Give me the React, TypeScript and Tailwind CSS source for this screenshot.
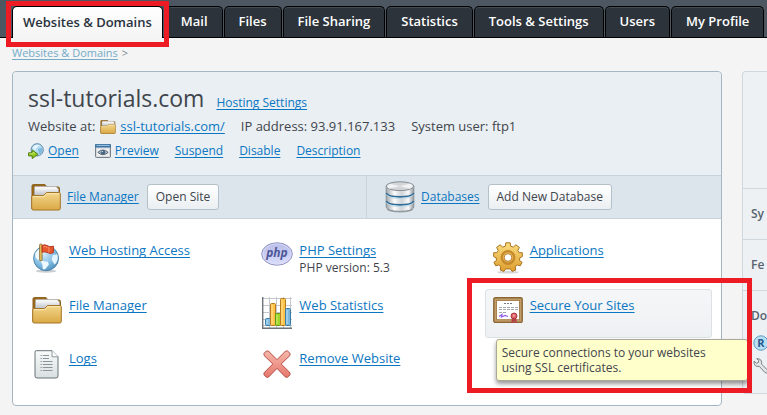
import type { ReactNode } from "react";

type IconProps = { className?: string };

const tabs = ["Mail", "Files", "File Sharing", "Statistics", "Tools & Settings", "Users", "My Profile"];

const linkClass = "text-[#0b77c2] underline underline-offset-2 [text-decoration-skip-ink:none]";

function FolderIcon({ className }: IconProps) {
  return (
    <svg viewBox="0 0 30 27" className={className} fill="none">
      <defs>
        <linearGradient id="folderFront" x1="0" y1="8" x2="0" y2="26" gradientUnits="userSpaceOnUse">
          <stop stopColor="#f3d78d" />
          <stop offset="1" stopColor="#dba945" />
        </linearGradient>
        <linearGradient id="folderPaper" x1="0" y1="3" x2="0" y2="12" gradientUnits="userSpaceOnUse">
          <stop stopColor="#ffffff" />
          <stop offset="1" stopColor="#b9bdc4" />
        </linearGradient>
      </defs>
      <path d="M1 25V2Q1 .6 2.4 .6H14L16 3H27Q28.5 3 28.5 4.5V24Q28.5 25.5 27 25.5H2Z" fill="#9a6a1d" stroke="#8b5d17" />
      <path d="M3.5 12V3.5Q3.5 2.6 4.5 2.6H25L27.5 5V12Z" fill="url(#folderPaper)" stroke="#a6a9ad" strokeWidth=".7" />
      <path d="M.7 24V12.8Q.7 11.5 2 11.5H12.5L15.5 8.5H28Q29.3 8.5 29.3 9.8V24.4Q29.3 26 27.8 26H2.2Q.7 26 .7 24Z" fill="url(#folderFront)" stroke="#a47427" />
      <path d="M1.8 12.7H13L16 9.7H28.2" stroke="#fbeab5" />
    </svg>
  );
}

function OpenIcon({ className }: IconProps) {
  return (
    <svg viewBox="0 0 16 16" className={className} fill="none">
      <circle cx="9.2" cy="6.8" r="6.1" fill="#b5dcf2" stroke="#5c86a6" />
      <path d="M5 4Q8 1 12 2.2Q8 4 7.5 7Q5.5 7 5 4Z" fill="#e9f7ff" />
      <path d="M10 6L14.5 4.5Q15 10 11 11.5Z" fill="#80bade" />
      <path d="M.6 9.8H4.2V7L10 11.3L4.2 15.6V12.9H.6Z" fill="#93c822" stroke="#4f7c10" strokeLinejoin="round" />
      <path d="M1.5 10.7H5V9.2L7 10.6" stroke="#d3f07d" strokeWidth=".8" />
    </svg>
  );
}

function PreviewIcon({ className }: IconProps) {
  return (
    <svg viewBox="0 0 16 14" className={className} fill="none">
      <rect x=".5" y=".5" width="15" height="13" rx="1" fill="#d4d9de" stroke="#77818b" />
      <rect x="0" y="0" width="16" height="3.6" rx="1" fill="#3d75a3" />
      <path d="M1.5 1.4H14.5" stroke="#9dc4e2" />
      <rect x="2" y="4.6" width="12" height="7.6" fill="#eef0f2" />
      <path d="M2.8 8.4Q8 3.6 13.2 8.4Q8 13 2.8 8.4Z" fill="#a9bccb" stroke="#5d6872" />
      <circle cx="8" cy="8.3" r="2.2" fill="#45647f" />
      <circle cx="7.3" cy="7.6" r=".7" fill="#fff" />
    </svg>
  );
}

function DatabaseIcon({ className }: IconProps) {
  return (
    <svg viewBox="0 0 30 32" className={className} fill="none">
      <defs>
        <linearGradient id="dbBody" x1="1" y1="0" x2="29" y2="0" gradientUnits="userSpaceOnUse">
          <stop stopColor="#9fa5a9" />
          <stop offset=".3" stopColor="#fbfcfc" />
          <stop offset=".55" stopColor="#d1d5d8" />
          <stop offset=".8" stopColor="#f7f8f9" />
          <stop offset="1" stopColor="#8d9499" />
        </linearGradient>
      </defs>
      <ellipse cx="15" cy="28" rx="13" ry="3.6" fill="#9ca5ac" />
      <path d="M1.2 5V26Q2 30.2 15 30.4Q28 30.2 28.8 26V5Z" fill="url(#dbBody)" stroke="#899197" />
      <path d="M1.2 12Q3 15.7 15 15.8Q27 15.7 28.8 12M1.2 20Q3 23.7 15 23.8Q27 23.7 28.8 20" stroke="#2e6b97" strokeWidth="1.7" />
      <path d="M1.5 13.8Q4 17.3 15 17.4Q26 17.3 28.5 13.8M1.5 21.8Q4 25.3 15 25.4Q26 25.3 28.5 21.8" stroke="#b3d4e8" strokeWidth=".8" />
      <ellipse cx="15" cy="5.2" rx="13.8" ry="4.4" fill="#d3d6d8" stroke="#858d92" />
      <path d="M15 5.2L4 7.7Q0 5 5 2.8ZM15 5.2L25 2.6Q30 5 25 7.8Z" fill="#f1f2f3" />
    </svg>
  );
}

function GlobeFlagIcon({ className }: IconProps) {
  return (
    <svg viewBox="0 0 32 32" className={className} fill="none">
      <defs>
        <radialGradient id="globeSea" cx=".38" cy=".3" r=".75">
          <stop stopColor="#d8effc" />
          <stop offset=".6" stopColor="#84bee3" />
          <stop offset="1" stopColor="#4c90bd" />
        </radialGradient>
      </defs>
      <ellipse cx="15" cy="30" rx="11" ry="1.6" fill="#c9cfd3" />
      <circle cx="15" cy="16.3" r="13.3" fill="url(#globeSea)" stroke="#5080a2" />
      <path d="M3.5 11Q8 4 15 5L13 10L9 14L11 17L7 18Q3 17 3.5 11Z" fill="#f1faff" />
      <path d="M9 19L17 20L18 23L14 28L11.5 28L11 23Z" fill="#eef9ff" />
      <path d="M22 13L27 12Q29 19 24 23L21 18Z" fill="#e5f5fd" />
      <rect x="8.2" y="1.2" width="2.5" height="17.6" rx=".8" fill="#f4cf67" stroke="#80591c" strokeWidth=".9" />
      <path d="M10.8 2.5Q14 1 17.3 3.4Q20 4.8 22.8 3.3V10.2Q20 12 17 10.4Q14 8.8 10.8 9.8Z" fill="#e8562c" stroke="#b52e16" />
      <path d="M12 4Q14 3 16.5 4.8M18 3.8V10.2" stroke="#f89a72" />
    </svg>
  );
}

function PhpIcon({ className }: IconProps) {
  return (
    <svg viewBox="0 0 32 24" className={className}>
      <defs>
        <linearGradient id="phpOval" x1="0" y1="0" x2="0" y2="1">
          <stop stopColor="#b8bce8" />
          <stop offset="1" stopColor="#dcdefc" />
        </linearGradient>
      </defs>
      <ellipse cx="16" cy="12" rx="15.3" ry="11.2" fill="url(#phpOval)" stroke="#8d91bd" />
      <ellipse cx="16" cy="12" rx="14.2" ry="10.1" fill="none" stroke="#dedffb" strokeWidth=".8" />
      <text x="16" y="14.5" textAnchor="middle" fill="#4d5797" className="font-['Open_Sans',sans-serif] text-[12px] font-bold italic">php</text>
    </svg>
  );
}

function GearIcon({ className }: IconProps) {
  return (
    <svg viewBox="0 0 30 32" className={className} fill="none">
      <defs>
        <linearGradient id="gearGold" x1="0" y1="0" x2="0" y2="30" gradientUnits="userSpaceOnUse">
          <stop stopColor="#fbdf83" />
          <stop offset="1" stopColor="#dd9c2c" />
        </linearGradient>
      </defs>
      <ellipse cx="15" cy="30.2" rx="11" ry="1.4" fill="#d6d6d6" />
      <path
        d="M12.8 .8H17.2L17.7 4.2L20.3 5.1L22.9 2.8L26.4 5.4L24.8 8.4L26.3 10.7L29.3 10.7V14.6L26.8 15.8L26.5 18.4L29.1 20.3L27.3 23.8L24.2 23L22.2 24.8L22.8 28L19.2 29.4L17.3 26.9H12.7L10.8 29.4L7.2 28L7.8 24.8L5.8 23L2.7 23.8L.9 20.3L3.5 18.4L3.2 15.8L.7 14.6V10.7H3.7L5.2 8.4L3.6 5.4L7.1 2.8L9.7 5.1L12.3 4.2Z"
        fill="url(#gearGold)"
        stroke="#a8731f"
        strokeLinejoin="round"
      />
      <circle cx="15" cy="15.5" r="6.2" stroke="#c68a2b" strokeWidth="2.4" />
      <circle cx="15" cy="15.5" r="3.8" fill="#fff" stroke="#b78032" />
    </svg>
  );
}

function ChartIcon({ className }: IconProps) {
  return (
    <svg viewBox="0 0 30 32" className={className} fill="none">
      <path d="M1 1.5H30M1 8.5H30M1 15.5H30M1 22.5H30M1 28.5H30M7.5 0V31M14.5 0V31M21.5 0V31M28.5 0V31" stroke="#c4c7cb" />
      <path d="M.7 0V31.3H30" stroke="#6e747a" strokeWidth="1.4" />
      <rect x="3.5" y="21.5" width="5" height="7" rx="1" fill="#83bde0" stroke="#387da9" />
      <rect x="8.5" y="6.5" width="5" height="22" rx="1" fill="#ffc34a" stroke="#b97a1d" />
      <rect x="13.5" y="16.5" width="5" height="12" rx="1" fill="#9ed52c" stroke="#5f941a" />
      <rect x="18.5" y="1.5" width="5" height="27" rx="1" fill="#ffc34a" stroke="#b97a1d" />
      <rect x="23.5" y="11.5" width="5" height="17" rx="1" fill="#7db8dc" stroke="#387da9" />
      <path d="M10 8V27M20 3V27" stroke="#ffe397" />
      <path d="M15 18V27" stroke="#d0f274" />
      <path d="M25 13V27M5 23V27" stroke="#bce2f6" />
    </svg>
  );
}

function CertificateIcon({ className }: IconProps) {
  return (
    <svg viewBox="0 0 30 27" className={className} fill="none">
      <rect x=".8" y=".8" width="28.4" height="24.6" rx="1.5" fill="#c29d67" stroke="#8a6535" strokeWidth="1.4" />
      <rect x="3.5" y="3.5" width="23" height="19.2" fill="#fff" stroke="#a78250" />
      <path d="M11 6.5H20" stroke="#747b85" strokeDasharray="2 1" />
      <path d="M6 10.5H25M6 12.5H25M6 15.5H14" stroke="#a3a7ae" strokeDasharray="3 1" />
      <path d="M6 19.5L9 17.5L8.5 20L12 18.5L15 19.5" stroke="#8a5de8" strokeWidth="1.2" />
      <path d="M19 20.5L18.3 26H20L21 23.8L22.2 26H24L22.8 20.5Z" fill="#b64047" />
      <circle cx="21" cy="19" r="3" fill="#dc6268" stroke="#a83640" />
      <circle cx="20.8" cy="18.7" r="1.1" fill="#f1a1a1" />
    </svg>
  );
}

function LogsIcon({ className }: IconProps) {
  return (
    <svg viewBox="0 0 30 29" className={className} fill="none">
      <defs>
        <linearGradient id="logPage" x1="0" y1="0" x2="0" y2="28" gradientUnits="userSpaceOnUse">
          <stop stopColor="#f9fbfb" />
          <stop offset="1" stopColor="#d9dfe0" />
        </linearGradient>
      </defs>
      <path d="M4.2 .7H20L26 6.7V26Q26 28 24 28H5Q3 28 3 26V2.2Q3 .7 4.2 .7Z" fill="url(#logPage)" stroke="#697377" />
      <path d="M20 .8V6.8H26" fill="#fff" stroke="#8e979b" />
      <path d="M8.5 5.5H17M8.5 8.5H17M8.5 11.5H20.5M8.5 14.5H20.5M8.5 17.5H20.5M8.5 20.5H20.5" stroke="#8b9597" strokeDasharray="1.3 1 12" />
    </svg>
  );
}

function RemoveIcon({ className }: IconProps) {
  return (
    <svg viewBox="0 0 30 29" className={className} fill="none">
      <defs>
        <linearGradient id="removeRed" x1="0" y1="0" x2="0" y2="28" gradientUnits="userSpaceOnUse">
          <stop stopColor="#f7b9ad" />
          <stop offset="1" stopColor="#e6766b" />
        </linearGradient>
      </defs>
      <path
        d="M5 1H6.4L15 9.7L23.6 1H25.6L28 3.4V5.4L19.2 14L28 22.8V24.8L25.6 27.2H23.6L15 18.4L6.4 27.2H4.4L2 24.8V22.8L10.8 14L2 5.4V3.4L4.4 1Z"
        fill="url(#removeRed)"
        stroke="#b44f46"
        strokeLinejoin="round"
      />
    </svg>
  );
}

function RegisteredIcon({ className }: IconProps) {
  return (
    <svg viewBox="0 0 16 16" className={className}>
      <circle cx="8" cy="8" r="7.2" fill="#b9dff4" stroke="#5c9bc3" />
      <text x="8" y="12" textAnchor="middle" fill="#255a91" className="font-['Open_Sans',sans-serif] text-[11px] font-bold">R</text>
    </svg>
  );
}

function WrenchIcon({ className }: IconProps) {
  return (
    <svg viewBox="0 0 16 16" className={className}>
      <path
        d="M1 3.2L3.6 5.2L5.4 4.5L5.8 2.5L3.7 .7Q7.3 .2 8.4 3Q8.9 4.6 8.4 6L14.6 12.1Q15.5 13.3 14.5 14.5Q13.2 15.5 12 14.5L6.2 8.3Q4 9 2.3 7.6Q.7 6 1 3.2Z"
        fill="#e3e6e8"
        stroke="#767d83"
        strokeLinejoin="round"
      />
    </svg>
  );
}

function ToolItem({ icon, label, note }: { icon: ReactNode; label: string; note?: string }) {
  return (
    <div className="flex items-start gap-[7px] px-2 py-2">
      <div className="flex w-[30px] shrink-0 justify-center">{icon}</div>
      <div className="leading-4">
        <a href="#" className={linkClass}>{label}</a>
        {note && <p className="mt-[2px] text-[12px]">{note}</p>}
      </div>
    </div>
  );
}

function PanelButton({ children }: { children: ReactNode }) {
  return (
    <button
      type="button"
      className="h-[26px] rounded-[3px] border border-[#b3c1cb] bg-gradient-to-b from-white to-[#ebeff2] px-2 text-[12px] whitespace-nowrap"
    >
      {children}
    </button>
  );
}

export default function App() {
  return (
    <div className="min-h-screen overflow-hidden bg-[#f4f4f4] font-['Open_Sans',sans-serif] text-[13px] text-[#3f454c]">
      <nav className="flex h-[38px] items-end gap-px border-b border-black bg-[#4c5761] pl-3 text-[13px] font-semibold whitespace-nowrap text-white">
        <a href="#" className="relative mr-[2px] -mb-px flex h-8 items-center rounded-t-[5px] border border-b-0 border-black bg-gradient-to-b from-white to-[#f4f4f4] px-[10px] text-[#29333d]">
          Websites &amp; Domains
          <span className="pointer-events-none absolute -inset-x-[7px] -top-[6px] -bottom-[9px] border-[5px] border-[#ed1c24]" />
        </a>
        {tabs.map((tab) => (
          <a key={tab} href="#" className="flex h-[31px] items-center rounded-t-[5px] border border-b-0 border-black bg-[#2c333a] px-[14px] shadow-[inset_0_1px_0_#434c54]">
            {tab}
          </a>
        ))}
      </nav>

      <div className="flex h-[33px] items-start gap-1 pt-[7px] pl-3 text-[11px] leading-4 text-[#7f8a92]">
        <a href="#" className="text-[#73abc9] underline underline-offset-2 [text-decoration-skip-ink:none]">Websites &amp; Domains</a>
        <span>&gt;</span>
      </div>

      <div className="flex items-start gap-5 pl-3">
        <main className="min-w-0 flex-1 rounded-[4px] border border-[#a4b6c3] bg-white">
          <header className="rounded-t-[4px] bg-[#eaeff3] px-[15px] pt-[10px] pb-[14px]">
            <div className="flex items-baseline gap-3">
              <h1 className="text-[23px] leading-8">ssl-tutorials.com</h1>
              <a href="#" className={`${linkClass} text-[12px]`}>Hosting Settings</a>
            </div>
            <div className="mt-[3px] flex h-5 items-center text-[13px]">
              <span>Website at:</span>
              <FolderIcon className="mr-1 ml-[5px] h-[14px] w-4" />
              <a href="#" className={linkClass}>ssl-tutorials.com/</a>
              <span className="ml-4">IP address: 93.91.167.133</span>
              <span className="ml-4">System user: ftp1</span>
            </div>
            <div className="mt-1 flex h-5 items-center gap-4 text-[12px]">
              <a href="#" className={`${linkClass} flex items-center gap-1`}><OpenIcon className="h-4 w-4" />Open</a>
              <a href="#" className={`${linkClass} flex items-center gap-1`}><PreviewIcon className="h-[14px] w-4" />Preview</a>
              <a href="#" className={linkClass}>Suspend</a>
              <a href="#" className={linkClass}>Disable</a>
              <a href="#" className={linkClass}>Description</a>
            </div>
          </header>

          <div className="grid h-11 grid-cols-2 border-y border-[#c8d3dc] bg-[#dde5ec] text-[12px]">
            <div className="flex items-center border-r border-[#c8d3dc] pl-[18px]">
              <FolderIcon className="h-[27px] w-[30px]" />
              <a href="#" className={`${linkClass} mr-2 ml-[6px]`}>File Manager</a>
              <PanelButton>Open Site</PanelButton>
            </div>
            <div className="flex items-center pl-[18px]">
              <DatabaseIcon className="h-8 w-[30px]" />
              <a href="#" className={`${linkClass} mr-2 ml-[6px]`}>Databases</a>
              <PanelButton>Add New Database</PanelButton>
            </div>
          </div>

          <div className="grid grid-cols-3 grid-rows-[51px_49px_49px] gap-x-[3px] gap-y-1 pt-[15px] pr-[9px] pb-[14px] pl-[11px]">
            <ToolItem icon={<GlobeFlagIcon className="h-8 w-8" />} label="Web Hosting Access" />
            <ToolItem icon={<PhpIcon className="h-6 w-8 shrink-0" />} label="PHP Settings" note="PHP version: 5.3" />
            <ToolItem icon={<GearIcon className="h-8 w-[30px]" />} label="Applications" />
            <ToolItem icon={<FolderIcon className="h-[27px] w-[30px]" />} label="File Manager" />
            <ToolItem icon={<ChartIcon className="h-8 w-[30px]" />} label="Web Statistics" />
            <div className="relative rounded-[3px] border border-[#dce1e4] bg-gradient-to-b from-[#f5f6f7] to-[#eef1f3]">
              <div className="-m-px">
                <ToolItem icon={<CertificateIcon className="h-[27px] w-[30px]" />} label="Secure Your Sites" />
              </div>
              <div role="tooltip" className="absolute top-[49px] left-[10px] z-10 w-[252px] rounded-[3px] border border-[#a9a99b] bg-[#ffffcc] py-[5px] pr-[30px] pl-[5px] text-[12px] leading-[15px] shadow-[0_3px_4px_#00000066]">
                Secure connections to your websites using SSL certificates.
              </div>
              <span className="pointer-events-none absolute -top-[12px] -left-[19px] z-20 h-[115px] w-[285px] border-[5px] border-[#ed1c24]" />
            </div>
            <ToolItem icon={<LogsIcon className="h-[29px] w-[30px]" />} label="Logs" />
            <ToolItem icon={<RemoveIcon className="h-[29px] w-[30px]" />} label="Remove Website" />
          </div>
        </main>

        <aside className="w-[25px] shrink-0 overflow-hidden rounded-l-[4px] border border-r-0 border-[#cfd8de] bg-[#edf1f4] pl-2 text-[12px] font-semibold text-[#58636e]">
          <div className="-ml-2 h-[117px] border-b border-[#cfd8de]" />
          <h2 className="-ml-2 flex h-[51px] items-center border-b border-[#cfd8de] pl-2">Sy</h2>
          <h2 className="-ml-2 flex h-[51px] items-center border-b border-[#cfd8de] pl-2">Fe</h2>
          <div className="h-[102px] pt-[15px]">
            <h2 className="leading-5">Do</h2>
            <RegisteredIcon className="mt-[9px] ml-[2px] h-4 w-4" />
            <WrenchIcon className="mt-[7px] ml-[2px] h-4 w-4" />
          </div>
        </aside>
      </div>
    </div>
  );
}
